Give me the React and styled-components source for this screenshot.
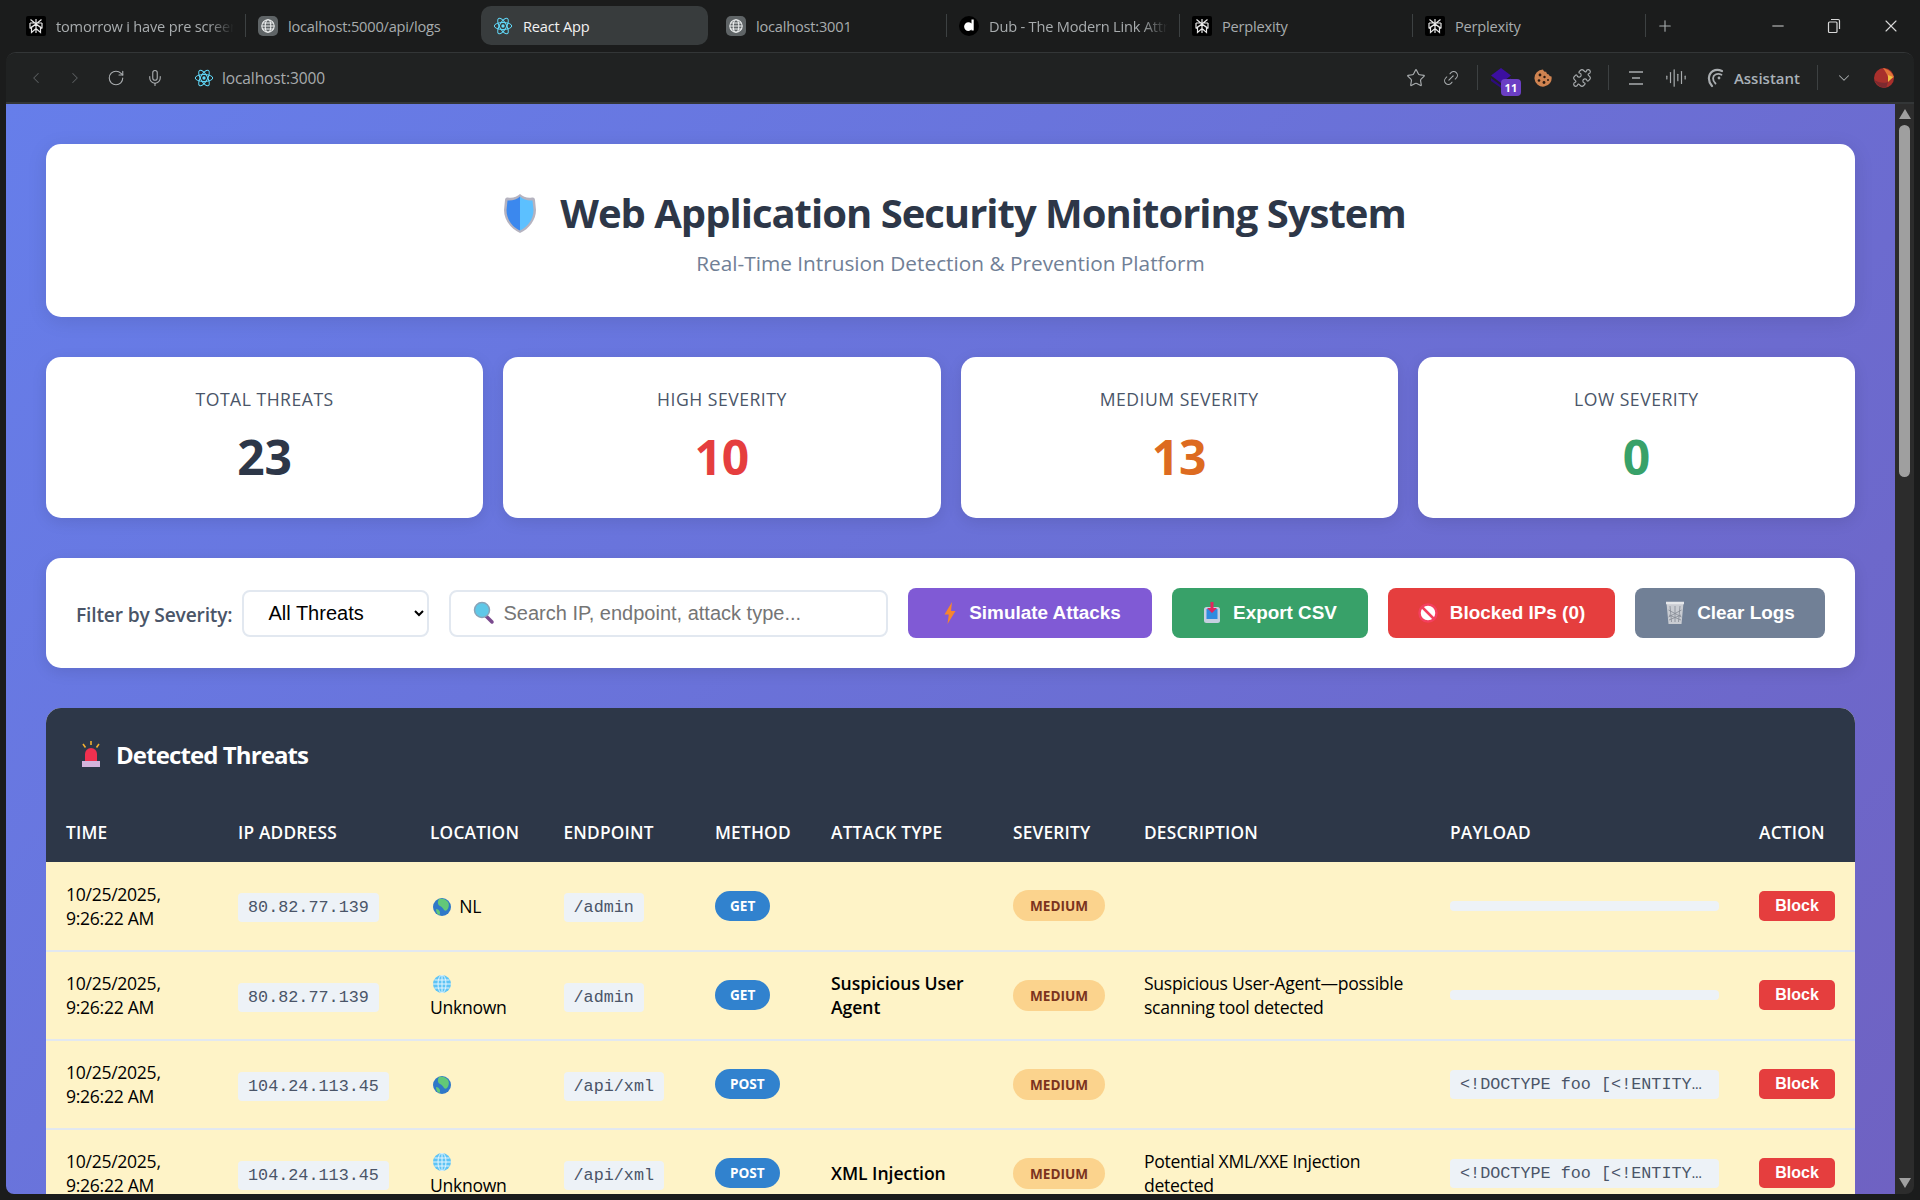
import React from "react";
import styled, { createGlobalStyle } from "styled-components";
import {
  ChevronLeft,
  ChevronRight,
  RotateCw,
  Mic,
  Star,
  Link2,
  Puzzle,
  AudioLines,
  ChevronDown,
  Plus,
  Minus,
  X,
} from "lucide-react";

const UI_FONT = `"Open Sans", "Noto Sans", sans-serif`;
const ARIAL = `"Liberation Sans", Arial, sans-serif`;
const MONO = `"Liberation Mono", "Courier New", monospace`;

const GlobalStyle = createGlobalStyle`
  html, body { margin: 0; padding: 0; height: 100%; overflow: hidden; background: #1b1c1c; }
  * { box-sizing: border-box; }
  body { font-family: ${UI_FONT}; }
`;

const ReactIcon = () => (
  <svg width="20" height="20" viewBox="0 0 24 24" fill="none" stroke="#61dafb" strokeWidth="1.2">
    <circle cx="12" cy="12" r="2" fill="#61dafb" stroke="none" />
    <ellipse cx="12" cy="12" rx="10.5" ry="4.2" />
    <ellipse cx="12" cy="12" rx="10.5" ry="4.2" transform="rotate(60 12 12)" />
    <ellipse cx="12" cy="12" rx="10.5" ry="4.2" transform="rotate(120 12 12)" />
  </svg>
);

const GlobeTab = () => (
  <svg width="20" height="20" viewBox="0 0 20 20" fill="none">
    <rect width="20" height="20" rx="5" fill="#5f6466" />
    <g stroke="#eceeee" strokeWidth="1.1">
      <circle cx="10" cy="10" r="6.2" />
      <ellipse cx="10" cy="10" rx="2.8" ry="6.2" />
      <path d="M3.8 10h12.4M4.7 7h10.6M4.7 13h10.6" />
    </g>
  </svg>
);

const PerplexityIcon = () => (
  <svg width="20" height="20" viewBox="0 0 20 20" fill="none">
    <rect width="20" height="20" rx="2" fill="#000" />
    <g stroke="#e8e8e8" strokeWidth="1.2">
      <path d="M10 3v14M4.5 3.5L10 8l5.5-4.5M4 7h12M4 7v5.5M16 7v5.5M4 12.5L10 8l6 4.5M5.5 16.5V11L10 8l4.5 3v5.5L10 12.5z" />
    </g>
  </svg>
);

const DubIcon = () => (
  <svg width="20" height="20" viewBox="0 0 20 20">
    <circle cx="10" cy="10" r="10" fill="#000" />
    <path d="M12.5 3.5h2.2v11h-2.2v-.9a4.3 4.3 0 1 1 0-6z" fill="#fff" />
  </svg>
);

const RestoreIcon = () => (
  <svg width="14" height="16" viewBox="0 0 14 16" fill="none" stroke="#d8d8d8" strokeWidth="1.2">
    <rect x="1.5" y="4" width="8.5" height="10.5" rx="1" />
    <path d="M4 1.5h7.2a1.3 1.3 0 0 1 1.3 1.3V11" />
  </svg>
);

const ExtensionIcon = () => (
  <svg width="22" height="20" viewBox="0 0 22 20">
    <path d="M10 0l10 7.500-10 7.500L0 7.500z" fill="#3c0fa0" />
    <path d="M0 10l10 7.500L20 10v3l-10 7L0 13z" fill="#2c0b7c" />
  </svg>
);

const CookieIcon = () => (
  <svg width="20" height="20" viewBox="0 0 20 20">
    <path d="M10 1.500c.5 2 2 2.400 3.200 2.200.1 1.600 1.200 2.700 2.700 2.700.2 1.200 1.100 2 2.600 2A8.600 8.600 0 1 1 10 1.500z" fill="#cf8350" />
    <g fill="#2a1a10">
      <circle cx="7" cy="7" r="1.400" />
      <circle cx="11.500" cy="9" r="1.200" />
      <circle cx="6" cy="12.500" r="1.300" />
      <circle cx="11" cy="14.500" r="1.400" />
      <circle cx="15" cy="12" r="1" />
    </g>
  </svg>
);

const AssistantIcon = () => (
  <svg width="20" height="20" viewBox="0 0 20 20" fill="none" stroke="#a9adb0" strokeLinecap="round">
    <path d="M7 18C2.500 13 3 6 8 3c2.500-1.400 6-1.400 9 0" strokeWidth="2.200" />
    <path d="M10.500 15.500C7 12 7.500 8 10.500 6.500c1.800-.9 4-.8 6 .2" strokeWidth="1.800" />
    <circle cx="14" cy="10" r="1.400" fill="#a9adb0" stroke="none" />
  </svg>
);

const ProfileIcon = () => (
  <svg width="20" height="20" viewBox="0 0 20 20">
    <circle cx="10" cy="10" r="10" fill="#a8302c" />
    <path d="M9 0c5 1 9 4 11 9l-6 4c1-4-1-7-5-13z" fill="#e2743a" />
    <path d="M14 7l5 2-5 5z" fill="#f0c040" />
    <path d="M0 12c3 5 7 8 12 8l2-6c-5 2-10 0-14-2z" fill="#7d2a30" />
  </svg>
);

const ShieldIcon = () => (
  <svg width="36" height="41" viewBox="0 0 36 41">
    <path d="M18 1c3 3 8 4.500 12 3.500 1.500 0 3 .5 3 2.500l1 10c0 10-7 19-16 23C9 36 2 27 2 17L3 7c0-2 1.500-2.500 3-2.500C10 5.500 15 4 18 1z" fill="#b5b3c0" />
    <path d="M18 3.500v34C10 34 4.500 26 4.500 17l1-9.500C10 8 15 6.500 18 3.500z" fill="#3b88ee" />
    <path d="M18 3.500v34c8-3.500 13.500-11.500 13.500-20.500l-1-9.500C26 8 21 6.500 18 3.500z" fill="#5cc0ff" />
  </svg>
);

const SearchIcon = () => (
  <svg width="22" height="24" viewBox="0 0 22 24">
    <path d="M13 15l6 6" stroke="#7a4a8e" strokeWidth="3.500" strokeLinecap="round" />
    <circle cx="9" cy="9" r="7.500" fill="#5fc8e8" stroke="#8aa4b8" strokeWidth="1.500" />
  </svg>
);

const BoltIcon = () => (
  <svg width="14" height="22" viewBox="0 0 14 22">
    <path d="M9 0L1.500 12.500h4.300L4.500 22l8-13H8z" fill="#f6852e" />
  </svg>
);

const InboxIcon = () => (
  <svg width="18" height="22" viewBox="0 0 18 22">
    <rect x="1" y="5" width="16" height="16" rx="2.500" fill="#c5cfe0" />
    <rect x="3.500" y="7" width="11" height="10" fill="#2f8be0" />
    <path d="M7.500 0h3v6H14l-5 5-5-5h3.500z" fill="#e0245e" />
  </svg>
);

const NoEntryIcon = () => (
  <svg width="20" height="20" viewBox="0 0 20 20">
    <circle cx="10" cy="10" r="8.500" fill="#fff" stroke="#f43f5e" strokeWidth="2.500" />
    <path d="M4 4l12 12" stroke="#f43f5e" strokeWidth="2.500" />
  </svg>
);

const TrashIcon = () => (
  <svg width="20" height="24" viewBox="0 0 20 24" fill="none">
    <path d="M1.500 2h17l-2 21h-13z" fill="#c9ccd2" />
    <path d="M1 2h18" stroke="#e5e7ea" strokeWidth="2.500" />
    <path d="M5 5l1.500 16M10 5v16M15 5l-1.500 16M3.500 9l13 7M16.500 9l-13 7M4 14l12 5M16 14L4 19" stroke="#858a94" strokeWidth=".8" />
  </svg>
);

const SirenIcon = () => (
  <svg width="22" height="26" viewBox="0 0 22 26">
    <path d="M11 0v4M3 3l2.500 3.500M19 3l-2.500 3.500" stroke="#f2b030" strokeWidth="1.600" />
    <path d="M5 20V13a6 6 0 0 1 12 0v7z" fill="#f0304f" />
    <rect x="2" y="20" width="18" height="6" fill="#d4b4dc" />
  </svg>
);

const EarthIcon = () => (
  <svg width="18" height="18" viewBox="0 0 18 18">
    <circle cx="9" cy="9" r="9" fill="#2f78c8" />
    <path d="M6 1c3-1 7 0 9 3 1.500 2 1 6-1 8-1 1-2 1-3 0-1-2-2-3-4-4C5 7 4 4 6 1zM3 11c2 0 3 1 4 3 0 1 0 3-1 3-2-1-3-3-3-6z" fill="#62c878" />
  </svg>
);

const WebIcon = () => (
  <svg width="18" height="18" viewBox="0 0 18 18" fill="none">
    <circle cx="9" cy="9" r="9" fill="#5ec4f5" />
    <g stroke="#e4f5fd" strokeWidth="1">
      <ellipse cx="9" cy="9" rx="4" ry="9" />
      <path d="M9 0v18M0 9h18M1.500 5h15M1.500 13h15" />
    </g>
  </svg>
);

const Browser = styled.div`
  display: flex;
  flex-direction: column;
  height: 1200px;
  overflow: hidden;
  background: #1b1c1c;
`;

const TabStrip = styled.div`
  display: flex;
  align-items: center;
  height: 51px;
  padding: 0 0 0 14px;
  flex: none;
`;

const Tab = styled.div`
  display: flex;
  align-items: center;
  gap: 10px;
  width: ${({ $w }) => $w}px;
  height: 39px;
  margin-right: ${({ $mr }) => $mr || 0}px;
  padding: 0 12px;
  border-radius: 10px;
  background: ${({ $active }) => ($active ? "#383c3d" : "transparent")};
  position: relative;
  flex: none;
  &::after {
    content: "";
    display: ${({ $sep }) => ($sep ? "block" : "none")};
    position: absolute;
    right: 0;
    top: 8px;
    bottom: 8px;
    width: 1px;
    background: #3d4142;
  }
`;

const TabTitle = styled.span`
  font-size: 14.6px;
  color: ${({ $active }) => ($active ? "#f2f2f2" : "#a8acae")};
  white-space: nowrap;
  overflow: hidden;
  letter-spacing: -0.2px;
  flex: 1;
  ${({ $fade }) =>
    $fade &&
    "-webkit-mask-image: linear-gradient(90deg, #000 85%, transparent); mask-image: linear-gradient(90deg, #000 85%, transparent);"}
`;

const NewTab = styled.div`
  display: flex;
  align-items: center;
  margin-left: 10px;
  color: #a8acae;
`;

const WindowControls = styled.div`
  display: flex;
  align-items: center;
  margin-left: auto;
  color: #d8d8d8;
  padding-right: 19px;
  gap: 40px;
`;

const ContentFrame = styled.div`
  flex: 1;
  min-height: 0;
  display: flex;
  flex-direction: column;
  margin: 1px 6px 6px 6px;
  border-radius: 10px 10px 8px 8px;
  overflow: hidden;
  border-top: 1px solid #333637;
`;

const Toolbar = styled.div`
  display: flex;
  align-items: center;
  height: 51px;
  padding: 0 0 0 21px;
  flex: none;
  background: #202222;
  border-bottom: 2px solid #333637;
  color: #8d9193;
`;

const NavButton = styled.span`
  display: flex;
  margin-right: ${({ $mr }) => $mr}px;
  color: ${({ $dim }) => ($dim ? "#5a5e60" : "#a8acae")};
`;

const UrlText = styled.span`
  font-size: 15.5px;
  color: #a8acae;
  margin-left: 8px;
  letter-spacing: -0.1px;
`;

const ToolGroup = styled.div`
  display: flex;
  align-items: center;
  margin-left: auto;
  color: #a8acae;
  padding-right: 20px;
`;

const ToolSep = styled.span`
  width: 1px;
  height: 25px;
  background: #3d4142;
  margin: 0 ${({ $r }) => $r}px 0 ${({ $l }) => $l}px;
`;

const ToolItem = styled.span`
  display: flex;
  align-items: center;
  margin-right: ${({ $mr }) => $mr || 0}px;
  position: relative;
`;

const CountBadge = styled.span`
  position: absolute;
  right: -8px;
  bottom: -8px;
  width: 20px;
  height: 17px;
  border-radius: 4px;
  background: #6b3fc4;
  color: #fff;
  font-size: 11px;
  font-weight: 700;
  line-height: 17px;
  text-align: center;
`;

const AssistantLabel = styled.span`
  font-size: 15px;
  font-weight: 600;
  color: #a9b1b8;
  margin-left: 9px;
`;

const Viewport = styled.div`
  flex: 1;
  min-height: 0;
  display: flex;
  overflow: hidden;
`;

const Page = styled.div`
  flex: 1;
  min-width: 0;
  padding: 40px;
  display: flex;
  flex-direction: column;
  gap: 40px;
  overflow: hidden;
  background: linear-gradient(135deg, #667eea 0%, #764ba2 100%);
  background-size: 100% 3500px;
  background-repeat: no-repeat;
`;

const Scrollbar = styled.div`
  width: 19px;
  flex: none;
  background: #2c2c2c;
  display: flex;
  flex-direction: column;
  align-items: center;
  padding-top: 5px;
`;

const ScrollArrow = styled.span`
  width: 0;
  height: 0;
  border-left: 6px solid transparent;
  border-right: 6px solid transparent;
  ${({ $down }) =>
    $down
      ? "border-top: 10px solid #a0a0a0; margin-top: auto; margin-bottom: 6px;"
      : "border-bottom: 10px solid #a0a0a0;"}
`;

const ScrollThumb = styled.span`
  width: 11px;
  height: 352px;
  margin-top: 6px;
  border-radius: 6px;
  background: #9f9f9f;
`;

const HeaderCard = styled.div`
  background: #fff;
  border-radius: 15px;
  height: 173px;
  flex: none;
  display: flex;
  flex-direction: column;
  align-items: center;
  padding-top: 44px;
  box-shadow: 0 4px 20px rgba(0, 0, 0, 0.1);
`;

const Title = styled.h1`
  margin: 0 0 0 7px;
  display: flex;
  align-items: center;
  gap: 22px;
  font-size: 40px;
  line-height: 50px;
  font-weight: 700;
  color: #2d3748;
  letter-spacing: -1px;
`;

const Subtitle = styled.p`
  margin: 12px 0 0;
  font-size: 20.8px;
  line-height: 26px;
  color: #718096;
`;

const StatsGrid = styled.div`
  display: grid;
  grid-template-columns: repeat(4, 1fr);
  gap: 20px;
  flex: none;
`;

const StatCard = styled.div`
  background: #fff;
  border-radius: 15px;
  height: 161px;
  text-align: center;
  padding-top: 31px;
  box-shadow: 0 4px 15px rgba(0, 0, 0, 0.1);
`;

const StatLabel = styled.div`
  font-size: 17.6px;
  line-height: 22px;
  font-weight: 500;
  letter-spacing: 0.5px;
  text-transform: uppercase;
  color: #4a5568;
`;

const StatValue = styled.div`
  font-size: 48px;
  line-height: 60px;
  font-weight: 700;
  margin-top: 17px;
  color: ${({ $color }) => $color};
`;

const FilterBar = styled.div`
  background: #fff;
  border-radius: 15px;
  height: 110px;
  flex: none;
  padding: 0 30px;
  display: flex;
  align-items: center;
  gap: 20px;
  box-shadow: 0 4px 15px rgba(0, 0, 0, 0.1);
`;

const FilterGroup = styled.div`
  display: flex;
  align-items: center;
  gap: 10px;
`;

const FilterLabel = styled.label`
  font-size: 19.2px;
  font-weight: 600;
  color: #4a5568;
  letter-spacing: -0.17px;
  margin-top: 2px;
`;

const SeveritySelect = styled.select`
  width: 187px;
  height: 47px;
  padding: 0 20px 0 20px;
  font-family: ${ARIAL};
  font-size: 20px;
  color: #000;
  background: #fff;
  border: 2px solid #e2e8f0;
  border-radius: 8px;
  outline: none;
`;

const SearchBox = styled.div`
  flex: 1;
  height: 47px;
  display: flex;
  align-items: center;
  gap: 8px;
  padding: 0 20px 0 22px;
  border: 2px solid #e2e8f0;
  border-radius: 8px;
  background: #fff;
`;

const SearchInput = styled.input`
  flex: 1;
  min-width: 0;
  border: none;
  outline: none;
  padding: 0;
  font-family: ${ARIAL};
  font-size: 20px;
  background: transparent;
  &::placeholder {
    color: #757575;
  }
`;

const ActionButton = styled.button`
  display: flex;
  align-items: center;
  justify-content: center;
  gap: 12px;
  height: 50px;
  width: ${({ $w }) => $w}px;
  padding: 0 0 0 ${({ $pl }) => $pl || 0}px;
  flex: none;
  border: none;
  border-radius: 8px;
  color: #fff;
  font-family: ${ARIAL};
  font-size: 18.9px;
  font-weight: 700;
  background: ${({ $bg }) => $bg};
`;

const ThreatPanel = styled.div`
  flex: none;
  background: #fff;
  border-radius: 15px 15px 0 0;
  overflow: hidden;
`;

const PanelHead = styled.div`
  background: #2d3748;
  height: 92px;
  padding: 0 34px;
  display: flex;
  align-items: center;
  gap: 14px;
  color: #fff;
  font-size: 24px;
  font-weight: 700;
  letter-spacing: -0.9px;
`;

const Table = styled.table`
  width: 100%;
  table-layout: fixed;
  border-collapse: collapse;
`;

const Th = styled.th`
  background: #2d3748;
  color: #fff;
  height: 62px;
  padding: 2px 0 0 20px;
  text-align: left;
  font-size: 17.3px;
  font-weight: 600;
  letter-spacing: 0.2px;
  text-transform: uppercase;
  white-space: nowrap;
`;

const Tr = styled.tr`
  background: #fef3c7;
  border-bottom: 2px solid #e2e8f0;
`;

const Td = styled.td`
  height: 89px;
  padding: 0 20px 1px;
  font-size: 17.6px;
  line-height: 24px;
  letter-spacing: -0.3px;
  color: #000;
  vertical-align: middle;
`;

const AttackText = styled.strong`
  font-weight: 600;
  letter-spacing: -0.05px;
`;

const Mono = styled.code`
  display: inline-block;
  margin-top: 4px;
  padding: 3px 10px;
  height: 29px;
  line-height: 23px;
  background: #edf2f7;
  border-radius: 4px;
  font-family: ${MONO};
  font-size: 16.8px;
  letter-spacing: 0;
  color: #4a5568;
`;

const PayloadPill = styled.code`
  display: block;
  width: 269px;
  min-height: 10px;
  padding: ${({ $empty }) => ($empty ? "5px 10px" : "3px 10px")};
  line-height: 23px;
  height: ${({ $empty }) => ($empty ? "10px" : "29px")};
  background: #edf2f7;
  border-radius: 4px;
  font-family: ${MONO};
  font-size: 16.8px;
  letter-spacing: 0;
  color: #4a5568;
  white-space: nowrap;
  overflow: hidden;
  text-overflow: ellipsis;
`;

const MethodBadge = styled.span`
  display: inline-block;
  height: 30px;
  line-height: 30px;
  padding: 0 15px;
  border-radius: 20px;
  background: #3182ce;
  color: #fff;
  font-size: 13.6px;
  font-weight: 700;
  letter-spacing: 0;
`;

const SeverityBadge = styled.span`
  display: inline-block;
  height: 31px;
  line-height: 31px;
  padding: 0 17px;
  border-radius: 20px;
  background: #fbd38d;
  color: #7b341e;
  font-size: 13.6px;
  font-weight: 700;
  letter-spacing: 0;
`;

const BlockButton = styled.button`
  display: block;
  width: 76px;
  height: 30px;
  border: none;
  border-radius: 5px;
  background: #e53e3e;
  color: #fff;
  font-family: ${ARIAL};
  font-size: 16px;
  font-weight: 700;
`;

const Flag = styled.span`
  display: inline-block;
  vertical-align: -3px;
  margin: 0 4px 0 3px;
  line-height: 0;
`;

const COLUMNS = [
  { label: "Time", width: 172 },
  { label: "IP Address", width: 192 },
  { label: "Location", width: 133.5 },
  { label: "Endpoint", width: 151.5 },
  { label: "Method", width: 116 },
  { label: "Attack Type", width: 182 },
  { label: "Severity", width: 131 },
  { label: "Description", width: 306 },
  { label: "Payload", width: 309 },
  { label: "Action", width: 117 },
];

const XXE = "<!DOCTYPE foo [<!ENTITY xxe SYSTEM";

const THREATS = [
  { ip: "80.82.77.139", earth: true, loc: "NL", path: "/admin", method: "GET" },
  {
    ip: "80.82.77.139",
    loc: "Unknown",
    path: "/admin",
    method: "GET",
    attack: "Suspicious User Agent",
    desc: "Suspicious User-Agent—possible scanning tool detected",
  },
  { ip: "104.24.113.45", earth: true, path: "/api/xml", method: "POST", payload: XXE },
  {
    ip: "104.24.113.45",
    loc: "Unknown",
    path: "/api/xml",
    method: "POST",
    attack: "XML Injection",
    desc: "Potential XML/XXE Injection detected",
    payload: XXE,
  },
];

const TABS = [
  { icon: <PerplexityIcon />, title: "tomorrow i have pre screening", w: 232, sep: true, fade: true },
  { icon: <GlobeTab />, title: "localhost:5000/api/logs", w: 235 },
  { icon: <ReactIcon />, title: "React App", w: 227, active: true, mr: 6 },
  { icon: <GlobeTab />, title: "localhost:3001", w: 233, sep: true },
  { icon: <DubIcon />, title: "Dub - The Modern Link Attribution", w: 233, sep: true, fade: true },
  { icon: <PerplexityIcon />, title: "Perplexity", w: 233, sep: true },
  { icon: <PerplexityIcon />, title: "Perplexity", w: 233, sep: true },
];

const STATS = [
  { label: "Total Threats", value: 23, color: "#2d3748" },
  { label: "High Severity", value: 10, color: "#e53e3e" },
  { label: "Medium Severity", value: 13, color: "#dd6b20" },
  { label: "Low Severity", value: 0, color: "#38a169" },
];

const App = () => {
  return (
    <Browser>
      <GlobalStyle />
      <TabStrip>
        {TABS.map((t, i) => (
          <Tab key={i} $w={t.w} $sep={t.sep} $active={t.active} $mr={t.mr}>
            {t.icon}
            <TabTitle $active={t.active} $fade={t.fade}>
              {t.title}
            </TabTitle>
          </Tab>
        ))}
        <NewTab>
          <Plus size={18} strokeWidth={1.5} />
        </NewTab>
        <WindowControls>
          <Minus size={18} strokeWidth={1.3} />
          <RestoreIcon />
          <X size={20} strokeWidth={1.3} />
        </WindowControls>
      </TabStrip>
      <ContentFrame>
        <Toolbar>
          <NavButton $dim $mr={21}>
            <ChevronLeft size={18} strokeWidth={1.4} />
          </NavButton>
          <NavButton $dim $mr={23}>
            <ChevronRight size={18} strokeWidth={1.4} />
          </NavButton>
          <NavButton $mr={21}>
            <RotateCw size={18} strokeWidth={1.5} />
          </NavButton>
          <NavButton $mr={30}>
            <Mic size={18} strokeWidth={1.5} />
          </NavButton>
          <ReactIcon />
          <UrlText>localhost:3000</UrlText>
          <ToolGroup>
            <ToolItem $mr={16}>
              <Star size={20} strokeWidth={1.4} />
            </ToolItem>
            <ToolItem>
              <Link2 size={18} strokeWidth={1.4} style={{ transform: "rotate(-45deg)" }} />
            </ToolItem>
            <ToolSep $l={17} $r={13} />
            <ToolItem $mr={20}>
              <ExtensionIcon />
              <CountBadge>11</CountBadge>
            </ToolItem>
            <ToolItem $mr={19}>
              <CookieIcon />
            </ToolItem>
            <ToolItem>
              <Puzzle size={20} strokeWidth={1.4} />
            </ToolItem>
            <ToolSep $l={16} $r={20} />
            <ToolItem $mr={22}>
              <svg width="14" height="14" viewBox="0 0 14 14" stroke="#a8acae" strokeWidth="1.6">
                <path d="M0 1h14M3 7h8M0 13h14" />
              </svg>
            </ToolItem>
            <ToolItem $mr={18}>
              <AudioLines size={22} strokeWidth={1.3} />
            </ToolItem>
            <ToolItem>
              <AssistantIcon />
              <AssistantLabel>Assistant</AssistantLabel>
            </ToolItem>
            <ToolSep $l={17} $r={17} />
            <ToolItem $mr={21}>
              <ChevronDown size={18} strokeWidth={1.4} />
            </ToolItem>
            <ToolItem>
              <ProfileIcon />
            </ToolItem>
          </ToolGroup>
        </Toolbar>
        <Viewport>
          <Page>
            <HeaderCard>
              <Title>
                <ShieldIcon />
                Web Application Security Monitoring System
              </Title>
              <Subtitle>Real-Time Intrusion Detection &amp; Prevention Platform</Subtitle>
            </HeaderCard>
            <StatsGrid>
              {STATS.map((s) => (
                <StatCard key={s.label}>
                  <StatLabel>{s.label}</StatLabel>
                  <StatValue $color={s.color}>{s.value}</StatValue>
                </StatCard>
              ))}
            </StatsGrid>
            <FilterBar>
              <FilterGroup>
                <FilterLabel>Filter by Severity:</FilterLabel>
                <SeveritySelect defaultValue="all">
                  <option value="all">All Threats</option>
                  <option value="high">High</option>
                  <option value="medium">Medium</option>
                  <option value="low">Low</option>
                </SeveritySelect>
              </FilterGroup>
              <SearchBox>
                <SearchIcon />
                <SearchInput placeholder="Search IP, endpoint, attack type..." />
              </SearchBox>
              <ActionButton $bg="#805ad5" $w={244} $pl={4}>
                <BoltIcon /> Simulate Attacks
              </ActionButton>
              <ActionButton $bg="#38a169" $w={196}>
                <InboxIcon /> Export CSV
              </ActionButton>
              <ActionButton $bg="#e53e3e" $w={227}>
                <NoEntryIcon /> Blocked IPs (0)
              </ActionButton>
              <ActionButton $bg="#718096" $w={190}>
                <TrashIcon /> Clear Logs
              </ActionButton>
            </FilterBar>
            <ThreatPanel>
              <PanelHead>
                <SirenIcon />
                Detected Threats
              </PanelHead>
              <Table>
                <colgroup>
                  {COLUMNS.map((c) => (
                    <col key={c.label} width={c.width} />
                  ))}
                </colgroup>
                <thead>
                  <tr>
                    {COLUMNS.map((c) => (
                      <Th key={c.label}>{c.label}</Th>
                    ))}
                  </tr>
                </thead>
                <tbody>
                  {THREATS.map((t, i) => (
                    <Tr key={i}>
                      <Td>10/25/2025, 9:26:22 AM</Td>
                      <Td>
                        <Mono>{t.ip}</Mono>
                      </Td>
                      <Td>
                        <Flag>{t.earth ? <EarthIcon /> : <WebIcon />}</Flag> {t.loc}
                      </Td>
                      <Td>
                        <Mono>{t.path}</Mono>
                      </Td>
                      <Td>
                        <MethodBadge>{t.method}</MethodBadge>
                      </Td>
                      <Td>
                        <AttackText>{t.attack}</AttackText>
                      </Td>
                      <Td>
                        <SeverityBadge>MEDIUM</SeverityBadge>
                      </Td>
                      <Td>{t.desc}</Td>
                      <Td>
                        <PayloadPill $empty={!t.payload}>{t.payload}</PayloadPill>
                      </Td>
                      <Td>
                        <BlockButton>Block</BlockButton>
                      </Td>
                    </Tr>
                  ))}
                </tbody>
              </Table>
            </ThreatPanel>
          </Page>
          <Scrollbar>
            <ScrollArrow />
            <ScrollThumb />
            <ScrollArrow $down />
          </Scrollbar>
        </Viewport>
      </ContentFrame>
    </Browser>
  );
};

export default App;
